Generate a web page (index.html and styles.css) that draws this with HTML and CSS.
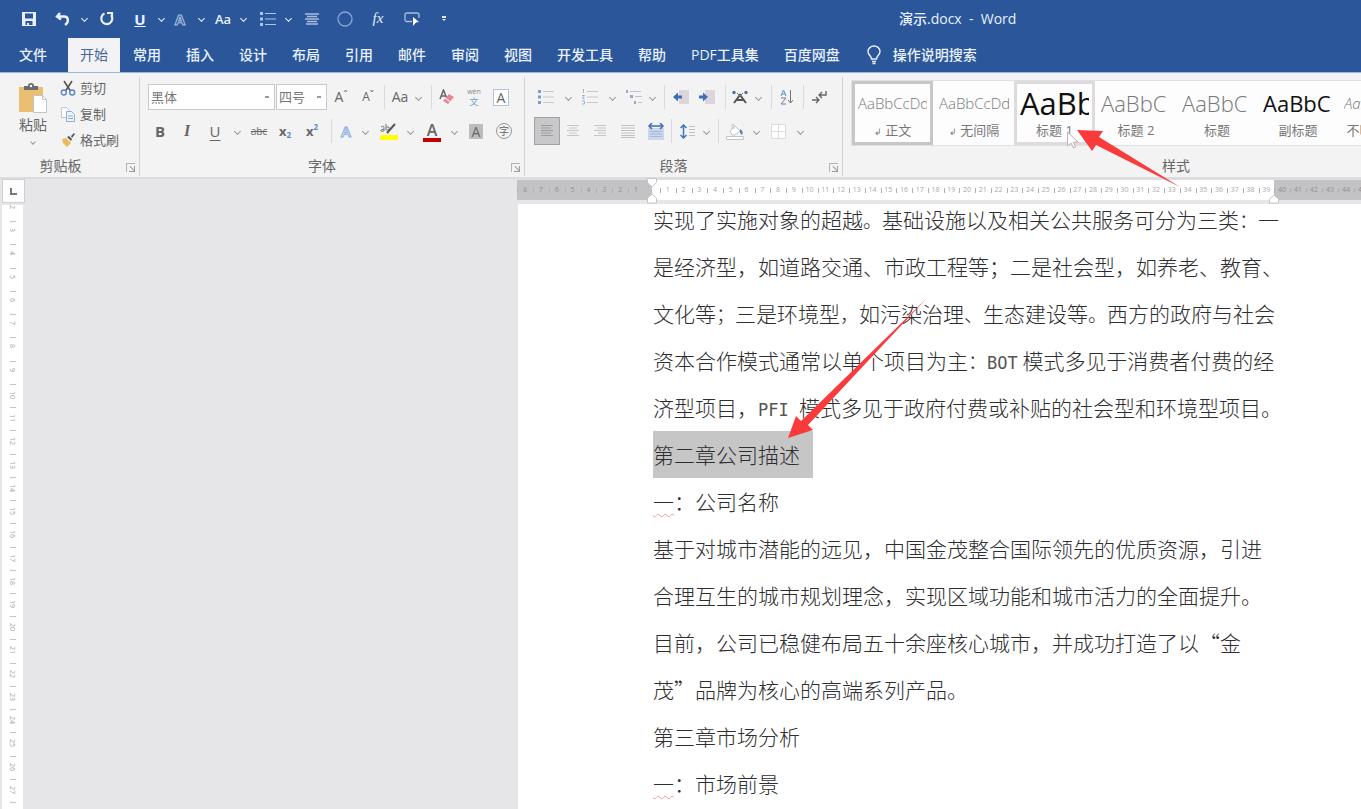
FILE: index.html
```html
<!DOCTYPE html>
<html lang="zh-CN">
<head>
<meta charset="utf-8">
<title>演示.docx - Word</title>
<link rel="stylesheet" href="styles.css">
</head>
<body>
<header class="top">
  <div class="titlebar">
    <div class="qat">
      <button aria-label="保存"><svg width="14" height="14" viewBox="0 0 14 14"><path fill="#e8f0fc" fill-rule="evenodd" d="M0 0h14v14H0zM3 1.500v5h8v-5zM3.500 9v4h1.500v-2h2v2h3.500V9z"/></svg></button>
      <button aria-label="撤消"><svg width="16" height="14" viewBox="0 0 16 14"><path d="M5 1 2 4.500l4 3M2.500 4.500H9c5 0 5 6 1 8.500" fill="none" stroke="#e8f0fc" stroke-width="2.400"/></svg></button>
      <button class="caret" aria-label="撤消选项"></button>
      <button aria-label="重复"><svg width="16" height="15" viewBox="0 0 16 15"><path d="M5.500 2.500A5.500 5.500 0 1 0 12 4M8 2h5v5" fill="none" stroke="#e8f0fc" stroke-width="2.200"/></svg></button>
      <button class="q-u" aria-label="下划线">U</button>
      <button class="caret" aria-label="下划线选项"></button>
      <button class="q-a" aria-label="文本效果">A</button>
      <button class="caret" aria-label="文本效果选项"></button>
      <button class="q-aa" aria-label="更改大小写">Aa</button>
      <button class="caret" aria-label="大小写选项"></button>
      <button aria-label="项目符号"><svg width="16" height="14" viewBox="0 0 16 14"><path fill="#a9c7ee" d="M0 0h3v3H0zM0 5.500h3v3H0zM0 11h3v3H0zM5 1h11v1H5zM5 6.500h11v1H5zM5 12h11v1H5z"/></svg></button>
      <button class="caret" aria-label="项目符号选项"></button>
      <button aria-label="居中"><svg width="14" height="12" viewBox="0 0 14 12"><path stroke="#a9bddf" stroke-width="1.500" d="M0 1h14M2 3.500h10M0 6h14M2 8.500h10M1 11h12"/></svg></button>
      <button aria-label="椭圆"><svg width="16" height="16" viewBox="0 0 16 16"><circle cx="8" cy="8" r="7" fill="none" stroke="#86a5d4" stroke-width="1.300"/></svg></button>
      <button class="q-fx" aria-label="公式">fx</button>
      <button aria-label="放映"><svg width="16" height="14" viewBox="0 0 16 14"><path d="M8 9.500H3q-2 0-2-2V3q0-2 2-2h10q2 0 2 2v3" fill="none" stroke="#a9bddf" stroke-width="1.300"/><path fill="#fff" d="m9 5 6 5-3 .5L9 14z"/></svg></button>
      <button aria-label="自定义快速访问工具栏"><svg width="6" height="7" viewBox="0 0 6 7"><path fill="#dbe8fb" d="M1 1h4v2H1zM1 4h4L3 6z"/></svg></button>
    </div>
    <h1 class="doc-title">演示.docx&nbsp; -&nbsp; Word</h1>
  </div>
  <nav class="tabs">
    <button class="file">文件</button>
    <button class="active">开始</button>
    <button>常用</button>
    <button>插入</button>
    <button>设计</button>
    <button>布局</button>
    <button>引用</button>
    <button>邮件</button>
    <button>审阅</button>
    <button>视图</button>
    <button>开发工具</button>
    <button>帮助</button>
    <button>PDF工具集</button>
    <button>百度网盘</button>
    <button class="tell"><svg width="14" height="20" viewBox="0 0 14 20"><path d="M4.500 14C4.500 11 1 10 1 6.500a6 5.500 0 0 1 12 0c0 3.500-3.500 4.500-3.500 7.500zM5 16.500h4M5.500 18.500h3" fill="none" stroke="#e8f0fc" stroke-width="1.400"/></svg>操作说明搜索</button>
  </nav>
</header>

<section class="ribbon">
  <div class="group clipboard">
    <div class="group-body">
      <button class="paste">
        <svg width="30" height="32" viewBox="0 0 30 32"><path fill="#e9bf72" d="M1 4h24v25H1z"/><path fill="#6b6b70" d="M6 3h4q0-3 3-3t3 3h4v4H6z"/><circle cx="13" cy="3" r="1.200" fill="#fff"/><path fill="#fff" stroke="#c4c4ca" d="M15.500 12.500h9l4 4v13h-13z"/><path fill="none" stroke="#c4c4ca" d="M24.500 12.500v4h4"/></svg>
        <span>粘贴</span><i class="chev"></i>
      </button>
      <div class="clip-list">
        <button><svg width="16" height="16" viewBox="0 0 16 16"><path d="M4 1l6.500 10M12 1 5.500 11" stroke="#555" stroke-width="1.600"/><g fill="none" stroke="#5b87c5" stroke-width="1.400"><circle cx="3.800" cy="12.500" r="2.500"/><circle cx="12.200" cy="12.500" r="2.500"/></g></svg>剪切</button>
        <button><svg width="16" height="16" viewBox="0 0 16 16"><path fill="#fff" stroke="#bcc8d8" d="M1.500 1.500h5l3 3v7h-8z"/><path fill="#eef4fc" stroke="#8fadd6" d="M6.500 5.500h5l3 3v7h-8zM8 10h5M8 12.500h5"/></svg>复制</button>
        <button><svg width="16" height="16" viewBox="0 0 16 16"><path fill="#eeb75b" d="m2 7 4-1 5 5-4 4-3-3-1-1z"/><path fill="#555" d="m7 5 2-1 3 3-1 2zM11 4l3-3 1 1-3 4z"/></svg>格式刷</button>
      </div>
    </div>
    <div class="group-name">剪贴板<button class="launcher" aria-label="剪贴板设置"></button></div>
  </div>

  <div class="group font">
    <div class="group-body">
      <div class="row font-1">
        <select class="font-name" aria-label="字体"><option>黑体</option></select>
        <select class="font-size" aria-label="字号"><option>四号</option></select>
        <button class="grow" aria-label="增大字号">A<sup>ˆ</sup></button>
        <button class="grow small" aria-label="减小字号">A<sup>ˇ</sup></button>
        <i class="sep"></i>
        <button class="aa" aria-label="更改大小写">Aa</button>
        <button class="caret" aria-label="大小写选项"></button>
        <i class="sep"></i>
        <button aria-label="清除格式"><svg width="16" height="16" viewBox="0 0 16 16"><path d="M1 10 4.500 1 8 10M2 7h5" fill="none" stroke="#666" stroke-width="1.500"/><path fill="#e8879a" d="m10 5 5 3-6 7-5-3z"/><path stroke="#fff" d="m6 9 5 3.500"/></svg></button>
        <button class="pinyin" aria-label="拼音指南"><small>wén</small><span>文</span></button>
        <button aria-label="字符边框"><span class="boxed">A</span></button>
      </div>
      <div class="row font-2">
        <button class="b" aria-label="加粗">B</button>
        <button class="it" aria-label="倾斜">I</button>
        <button class="un" aria-label="下划线">U</button>
        <button class="caret" aria-label="下划线选项"></button>
        <button class="strike" aria-label="删除线">abc</button>
        <button class="sx" aria-label="下标">x<sub>2</sub></button>
        <button class="sx" aria-label="上标">x<sup>2</sup></button>
        <i class="sep"></i>
        <button class="fx-a" aria-label="文本效果">A</button>
        <button class="caret" aria-label="文本效果选项"></button>
        <button aria-label="突出显示"><svg width="20" height="18" viewBox="0 0 20 18"><path fill="#ff0" d="M1 13h18v5H1z"/><path stroke="#555" stroke-width="2" d="M16 2 8 11"/><path stroke="#777" fill="none" d="M2 5q3-2 3 1v3q-4 1-3-1l3-1M7 2v6q4 0 3-3L7 5"/></svg></button>
        <button class="caret" aria-label="突出显示选项"></button>
        <button class="color" aria-label="字体颜色">A</button>
        <button class="caret" aria-label="字体颜色选项"></button>
        <button aria-label="字符底纹"><span class="shaded">A</span></button>
        <button aria-label="带圈字符"><span class="ring">字</span></button>
      </div>
    </div>
    <div class="group-name">字体<button class="launcher" aria-label="字体设置"></button></div>
  </div>

  <div class="group para">
    <div class="group-body">
      <div class="row para-1">
        <button aria-label="项目符号"><svg width="16" height="14" viewBox="0 0 16 14"><path fill="#7f9cc8" d="M0 0h3v3H0zM0 5.500h3v3H0zM0 11h3v3H0z"/><path stroke="#c6c6c9" d="M5 1.500h11M5 7h11M5 12.500h11"/></svg></button>
        <button class="caret" aria-label="项目符号选项"></button>
        <button aria-label="编号"><svg width="16" height="16" viewBox="0 0 16 16"><path stroke="#9db3d4" fill="none" d="M1.500 0v4M0 6.500h2.500L.5 9.500h2M0 12h2.500v3H0"/><path stroke="#c6c6c9" d="M5 2.500h11M5 8h11M5 13.500h11"/></svg></button>
        <button class="caret" aria-label="编号选项"></button>
        <button aria-label="多级列表"><svg width="16" height="14" viewBox="0 0 16 14"><path fill="#a5a2c8" d="M0 0h2v3H0zM4 5h3v3H4zM8 11h2v3H8z"/><path stroke="#c2c2cd" d="M4 1.500h11M9 6.500h7M12 12.500h4"/></svg></button>
        <button class="caret" aria-label="多级列表选项"></button>
        <i class="sep"></i>
        <button aria-label="减少缩进"><svg width="16" height="14" viewBox="0 0 16 14"><path fill="#dcd5dc" d="M6 0h10v14H6z"/><path fill="#3c6fb5" d="m0 7 5-4.500v3h4v3H5v3z"/></svg></button>
        <button aria-label="增加缩进"><svg width="16" height="14" viewBox="0 0 16 14"><path fill="#dcd5dc" d="M6 0h10v14H6z"/><path fill="#3c6fb5" d="M9 7 4 2.500v3H0v3h4v3z"/></svg></button>
        <i class="sep"></i>
        <button aria-label="中文版式"><svg width="16" height="16" viewBox="0 0 16 16"><path d="M2 14 8 6l6 8M5 11h6" fill="none" stroke="#555" stroke-width="2"/><circle cx="2" cy="3.500" r="1.700" fill="#4e71a8"/><circle cx="14" cy="3.500" r="1.700" fill="#4e71a8"/><path d="M5 4 8 7l3-3" fill="none" stroke="#777"/></svg></button>
        <button class="caret" aria-label="中文版式选项"></button>
        <i class="sep"></i>
        <button aria-label="排序"><svg width="14" height="16" viewBox="0 0 14 16"><path d="M1 7 3.500 1 6 7M2 5h3" fill="none" stroke="#5f8fc8"/><path d="M1 9h5l-5 6h5" fill="none" stroke="#8f6fa6"/><path d="M10.500 1v13M8 11l2.500 3 2.500-3" fill="none" stroke="#777"/></svg></button>
        <i class="sep"></i>
        <button aria-label="显示编辑标记"><svg width="16" height="14" viewBox="0 0 16 14"><path d="M1 10h6M5 7l3 3-3 3M15 1v4H8M11 2 8 5l3 3" fill="none" stroke="#666" stroke-width="1.400"/></svg></button>
      </div>
      <div class="row para-2">
        <button class="pressed" aria-label="左对齐"><svg width="12" height="12" viewBox="0 0 12 12"><path stroke="#9c9c9e" d="M0 .5h12M0 3h10M0 5.500h12M0 8h10M0 10.500h12"/></svg></button>
        <button aria-label="居中"><svg width="12" height="12" viewBox="0 0 12 12"><path stroke="#c6c6c9" d="M0 .5h12M2 3h8M0 5.500h12M2 8h8M0 10.500h12"/></svg></button>
        <button aria-label="右对齐"><svg width="12" height="12" viewBox="0 0 12 12"><path stroke="#c6c6c9" d="M0 .5h12M3 3h9M0 5.500h12M4 8h8M0 10.500h12"/></svg></button>
        <button aria-label="两端对齐"><svg width="14" height="13" viewBox="0 0 14 13"><path stroke="#c2c2c5" d="M0 .5h14M0 3h14M0 5.500h14M0 8h14M0 10.500h14M0 12.500h14"/></svg></button>
        <button aria-label="分散对齐"><svg width="18" height="17" viewBox="0 0 18 17"><path fill="#c9d8ee" d="M1 5h16v12H1z"/><path d="M2 3h14M5 0 2 3l3 3M13 0l3 3-3 3" fill="none" stroke="#3c6fb5" stroke-width="1.500"/><path stroke="#a9b8cf" d="M3 8.500h12M3 11h12M3 13.500h12"/></svg></button>
        <i class="sep"></i>
        <button aria-label="行距"><svg width="15" height="15" viewBox="0 0 15 15"><path d="M3.500 1v13M.5 4l3-3 3 3M.5 11l3 3 3-3" fill="none" stroke="#3c78bd" stroke-width="1.500"/><path stroke="#c0c0c4" d="M9 2.500h6M9 5.500h6M9 8.500h6M9 11.500h6"/></svg></button>
        <button class="caret" aria-label="行距选项"></button>
        <i class="sep"></i>
        <button aria-label="底纹"><svg width="18" height="17" viewBox="0 0 18 17"><path fill="#fff" stroke="#c4c4c8" d="M.5 13.500h17v3H.5zM4 8l5-5 5 5-5 4H6zM6 6V2q0-2 2 0v4"/><path fill="#5d83a9" d="M14 6q4 2 2 6l-2-2z"/></svg></button>
        <button class="caret" aria-label="底纹选项"></button>
        <button aria-label="边框"><svg width="15" height="15" viewBox="0 0 15 15"><path fill="#fff" stroke="#dcdcdf" d="M.5 .5h14v14H.5zM7.500 .5v14M.5 7.500h14"/></svg></button>
        <button class="caret" aria-label="边框选项"></button>
      </div>
    </div>
    <div class="group-name">段落<button class="launcher" aria-label="段落设置"></button></div>
  </div>

  <div class="group styles">
    <div class="gallery">
      <button class="style current"><span class="sample">AaBbCcDd</span><span class="sname"><small>↲</small> 正文</span></button>
      <button class="style"><span class="sample">AaBbCcDd</span><span class="sname"><small>↲</small> 无间隔</span></button>
      <button class="style hover"><span class="sample huge">AaBb</span><span class="sname">标题 1</span></button>
      <button class="style"><span class="sample large">AaBbC</span><span class="sname">标题 2</span></button>
      <button class="style"><span class="sample large">AaBbC</span><span class="sname">标题</span></button>
      <button class="style"><span class="sample large strong">AaBbC</span><span class="sname">副标题</span></button>
      <button class="style"><span class="sample slant">AaBbCcDd</span><span class="sname">不明显强调</span></button>
    </div>
    <div class="group-name">样式</div>
  </div>
</section>

<main class="workspace">
  <div class="side">
    <button class="tabstop" aria-label="制表符"><svg width="7" height="7" viewBox="0 0 7 7"><path d="M1 0v6h6" fill="none" stroke="#777" stroke-width="2"/></svg></button>
    <div class="vruler" data-from="2" data-to="27"></div>
  </div>
  <div class="canvas">
    <div class="hruler">
      <div class="rule margin-left" data-from="8" data-to="1"></div>
      <div class="rule text-width" data-from="1" data-to="39">
        <svg class="indent" width="12" height="26" viewBox="0 0 12 26"><path fill="#fff" stroke="#c6c6c8" d="M1.500 .5h9v4L6 9 1.500 4.500zM6 16l4.500 4v5h-9v-5z"/></svg>
        <svg class="indent right" width="12" height="10" viewBox="0 0 12 10"><path fill="#fff" stroke="#c6c6c8" d="m6 1 4.500 4v4h-9V5z"/></svg>
      </div>
      <div class="rule margin-right" data-from="40" data-to="45"></div>
    </div>
    <article class="page">
      <div class="text">
        <p>实现了实施对象的超越<span class="tight">。</span>基础设施以及相关公共服务可分为三类<span class="tight">：</span>一<br>是经济型，如道路交通、市政工程等；二是社会型，如养老、教育、<br>文化等<span class="tight">；</span>三是环境型<span class="tight">，</span>如污染治理<span class="tight">、</span>生态建设等<span class="tight">。</span>西方的政府与社会<br>资本合作模式通常以单个项目为主<span class="tight">：</span><span class="latin">BOT</span> 模式多见于消费者付费的经<br>济型项目，<span class="latin">PFI </span>模式多见于政府付费或补贴的社会型和环境型项目。</p>
        <p class="selected">第二章公司描述</p>
        <p><span class="typo">一</span>：公司名称</p>
        <p>基于对城市潜能的远见，中国金茂整合国际领先的优质资源，引进<br>合理互生的城市规划理念，实现区域功能和城市活力的全面提升。<br>目前，公司已稳健布局五十余座核心城市，并成功打造了以“金<br>茂”品牌为核心的高端系列产品。</p>
        <p>第三章市场分析</p>
        <p><span class="typo">一</span>：市场前景</p>
      </div>
    </article>
  </div>
</main>

<svg class="overlay" width="1361" height="809" viewBox="0 0 1361 809" aria-hidden="true">
  <path fill="#fff" stroke="#b9b2b6" d="M1067.500 132v14l3.500-3 2.500 5 2-1-2-5h4.500z"/>
  <path fill="#fb3a3c" d="m1077 130 26 1-4 6 81 50-84-42-4 6zM788 438l8-22 5 5L927 298 808 425l5 5z"/>
</svg>
<script src="rulers.js"></script>
</body>
</html>
```
FILE: styles.css
```css
* { box-sizing: border-box; }
body {
  margin: 0;
  height: 100vh;
  display: flex;
  flex-direction: column;
  overflow: hidden;
  position: relative;
  background: #e6e6e8;
  color: #666;
  font: 13px/18px "Open Sans", "Noto Sans CJK SC", sans-serif;
}
button, select {
  border: 0;
  margin: 0;
  padding: 0;
  background: none;
  color: inherit;
  font: inherit;
  white-space: nowrap;
}
button svg { display: block; flex: none; }
i { font-style: normal; }

/* Title bar and tabs */
.top { flex: none; background: #2b579a; color: #e8f0fc; }
.titlebar { display: flex; align-items: center; height: 37px; }
.qat {
  display: grid;
  flex: none;
  grid-template-columns: 38px 30px 12px 34px 32px 11px 26px 16px 28px 13px 35px 7px 40px 26px 40px 28px 36px;
  padding-left: 10px;
  height: 37px;
}
.qat button, .row button { display: flex; align-items: center; justify-content: center; }
.doc-title { margin: 0 0 0 437px; font: 500 14px/20px "Open Sans", "Noto Sans CJK SC", sans-serif; white-space: nowrap; }
.caret::before, .chev {
  content: "";
  display: block;
  flex: none;
  width: 4px;
  height: 4px;
  border: solid currentColor;
  border-width: 0 1px 1px 0;
  transform: rotate(45deg);
}
.q-u { font-weight: 700; font-size: 15px; text-decoration: underline; }
.q-a { font-size: 15px; font-weight: 700; color: transparent; -webkit-text-stroke: 1px #a9bddf; }
.q-aa { font-weight: 600; }
.q-fx { font: italic 15px "Liberation Serif", serif; }
.tabs { display: flex; gap: 1px; height: 35px; padding: 1px 0 0 7px; font-size: 14px; }
.tabs button { padding: 0 12px; font-weight: 500; }
.tabs .file { margin-right: 8px; }
.tabs .active { background: #f3f3f5; color: #4a6799; font-weight: 400; }
.tabs .tell { display: flex; align-items: center; gap: 12px; padding-left: 14px; }

/* Ribbon */
.ribbon {
  display: flex;
  flex: none;
  height: 107px;
  padding: 4px 0 1px 2px;
  background: #f3f3f4;
  border-top: 1px solid #9db6de;
  border-bottom: 2px solid #dcdcde;
  overflow: hidden;
}
.group { display: flex; flex: none; flex-direction: column; justify-content: space-between; border-right: 1px solid #d2d2d5; }
.group-body { padding-top: 6px; }
.group-name { position: relative; padding-right: 20px; font-size: 14px; line-height: 20px; text-align: center; }
.launcher { position: absolute; right: 4px; bottom: 4px; width: 9px; height: 9px; border: solid #b5b5b8; border-width: 1px 0 0 1px; }
.launcher::after { content: ""; position: absolute; right: 0; bottom: 0; width: 5px; height: 5px; border: solid #9c9ca0; border-width: 0 1px 1px 0; }
.launcher::before { content: ""; position: absolute; left: 2px; top: 4px; width: 6px; height: 1px; background: #9c9ca0; transform: rotate(45deg); }
.sep { width: 1px; height: 24px; background: #dadadd; justify-self: center; align-self: center; }

.clipboard { width: 138px; }
.clipboard .group-body { display: flex; gap: 10px; padding: 0 0 0 16px; }
.paste { display: flex; flex-direction: column; align-items: center; width: 30px; padding-top: 6px; font-size: 14px; line-height: 20px; }
.paste .chev { margin-top: 5px; color: #999; }
.clip-list { display: flex; flex-direction: column; gap: 8px; padding-top: 2px; }
.clip-list button { display: flex; align-items: center; gap: 4px; height: 18px; }
.clip-list svg { margin-left: 2px; }

.row { display: grid; align-items: stretch; height: 28px; }
.row .caret { color: #999; }
.font { width: 385px; }
.font .row, .para .row { margin-bottom: 6px; }
.row:last-child { margin-bottom: 0; }
.font-1 { grid-template-columns: 127px 52px 28px 26px 7px 24px 13px 13px 17px 38px 16px; padding-left: 8px; }
.font-2 { grid-template-columns: 30px 24px 32px 12px 32px 20px 34px 4px 26px 12px 36px 6px 38px 6px 38px 18px; padding-left: 5px; }
.font-1 select {
  appearance: none;
  align-self: center;
  height: 26px;
  padding-left: 2px;
  border: 1px solid #c9c9cc;
  border-radius: 0;
  background: #fff linear-gradient(#999, #999) no-repeat right 5px center / 4px 2px;
  color: #777;
  font-size: 13px;
}
.font-1 .font-size { margin-left: 1px; }
.grow { font-size: 14px; }
.grow.small { font-size: 12px; }
.grow sup { font-size: 10px; line-height: 18px; padding-bottom: 4px; }
.aa { font-size: 14px; }
.row .pinyin { flex-direction: column; color: #7da0d0; font-size: 9px; line-height: 11px; }
.pinyin small { font-size: 7px; line-height: 8px; color: #888; }
.boxed { width: 16px; border: 1px solid #b5c3da; background: #fff; font-size: 14px; line-height: 15px; }
.b { font-weight: 700; font-size: 15px; }
.it { font: italic 700 16px "Liberation Serif", serif; }
.un { font-size: 15px; text-decoration: underline; text-underline-offset: 3px; }
.strike { font-size: 10px; text-decoration: line-through; }
.sx { font-weight: 700; font-size: 13px; }
.sx sup, .sx sub { color: #5c88c4; font-size: 8px; line-height: 10px; }
.sx sup { padding-bottom: 8px; }
.sx sub { padding-top: 8px; }
.fx-a { color: #f3f7fd; font-weight: 600; font-size: 15px; -webkit-text-stroke: 1px #8cb1e0; }
.row .color { font-weight: 600; font-size: 16px; line-height: 20px; padding-bottom: 3px; background: linear-gradient(#c00000, #c00000) no-repeat center 21px / 18px 4px; }
.shaded { width: 14px; background: #bcbcbe; font-size: 14px; line-height: 15px; }
.ring { width: 16px; height: 16px; border: 1px solid #999; border-radius: 50%; font-size: 10px; line-height: 14px; }

.para { width: 318px; }
.para-1 { grid-template-columns: 30px 14px 30px 14px 30px 6px 18px 16px 36px 0 30px 6px 20px 12px 20px 12px; padding-left: 6px; }
.para-2 { grid-template-columns: 26px 26px 28px 28px 28px 3px 28px 10px 14px 20px 22px 22px 22px; padding-left: 9px; }
.pressed { background: #c8c8cb; border: 1px solid #a2a2a5; }

.styles { flex: 1; min-width: 0; border: 0; padding-left: 8px; }
.styles .group-name { width: 670px; }
.gallery { display: flex; margin-top: 3px; height: 66px; background: #fdfdfe; border: 1px solid #e0e0e2; border-right: 0; overflow: hidden; }
.style { display: flex; flex: none; flex-direction: column; align-items: center; width: 81px; padding: 4px 5px 0 6px; border: 0 solid #c9c6c9; }
.current, .hover { padding: 1px 3px 0; border-width: 3px; }
.hover { border-color: #dedade; }
.sample { width: 100%; height: 36px; overflow: hidden; text-align: left; font: 300 15px/36px "Open Sans", sans-serif; color: #777; }
.large { font-size: 22px; }
.huge { font-size: 31px; font-weight: 500; color: #111; }
.strong { font-weight: 500; color: #111; }
.slant { font-style: italic; }
.sname { line-height: 18px; color: #777; white-space: nowrap; }
.sname small { font-size: 9px; }

/* Workspace */
.workspace { display: flex; flex: 1; min-height: 0; }
.side { display: flex; flex: none; flex-direction: column; width: 22px; margin-left: 2px; }
.tabstop { display: flex; flex: none; align-items: center; justify-content: center; width: 23px; height: 24px; background: #fdfdfe; border: 1px solid #d0d0d2; }
.vruler { display: flex; flex: 1; flex-direction: column; width: 21px; margin-top: 2px; background: #fff; overflow: hidden; }
.vruler span { display: flex; flex: 1; align-items: center; justify-content: flex-start; font-size: 7px; line-height: 9px; color: #a5a5a8; writing-mode: vertical-rl; background: linear-gradient(#c4c4c6, #c4c4c6) no-repeat center bottom 6px / 6px 1px; }
.canvas { display: flex; flex: 1; min-width: 0; flex-direction: column; padding-left: 493px; }
.hruler { display: flex; flex: none; height: 25px; border-top: 1px solid #e0e0e2; border-bottom: 4px solid #e6e6e8; }
.rule { display: flex; flex: none; align-items: center; background: #c3c2c5; color: #929297; font-size: 7px; line-height: 8px; position: relative; }
.rule span { flex: 1; min-width: 0; text-align: center; background: linear-gradient(#b0b0b4, #b0b0b4) no-repeat left center / 1px 5px; }
.margin-left { width: 135px; padding-right: 8px; }
.text-width { width: 622px; padding-left: 8px; background: #fff; color: #a8a8ac; }
.rule.margin-right { flex: 1; overflow: hidden; }
.margin-right span { flex: 0 0 16px; }
.indent { position: absolute; left: -6px; top: -2px; z-index: 1; }
.indent.right { left: auto; right: -6px; top: 14px; }
.page { flex: 1; min-height: 0; padding-left: 135px; margin-left: 1px; background: #fff; overflow: hidden; }
.text { margin-top: -8px; font: 300 21px/47px "Noto Sans CJK SC", sans-serif; color: #2e2e30; white-space: nowrap; }
.text p { margin: 0; }
.tight { font-size: 19px; line-height: 1; }
.latin { font: 17px/1 "DejaVu Sans Mono", monospace; white-space: pre; color: #555; }
.text .selected { width: fit-content; padding-right: 13px; background: #c6c6c6; }
.typo { text-decoration: underline wavy #f09a9a 1px; text-underline-offset: 3px; }

/* Pointer and callout arrows */
.overlay { position: absolute; left: 0; top: 0; pointer-events: none; }
```
FILE: rulers.js
```js
// Fill each ruler with its numbered divisions.
document.querySelectorAll('[data-from]').forEach(function (ruler) {
  var from = Number(ruler.dataset.from);
  var to = Number(ruler.dataset.to);
  var step = from < to ? 1 : -1;
  for (var n = from; n !== to + step; n += step) {
    var mark = document.createElement('span');
    mark.textContent = n;
    ruler.appendChild(mark);
  }
});
```
